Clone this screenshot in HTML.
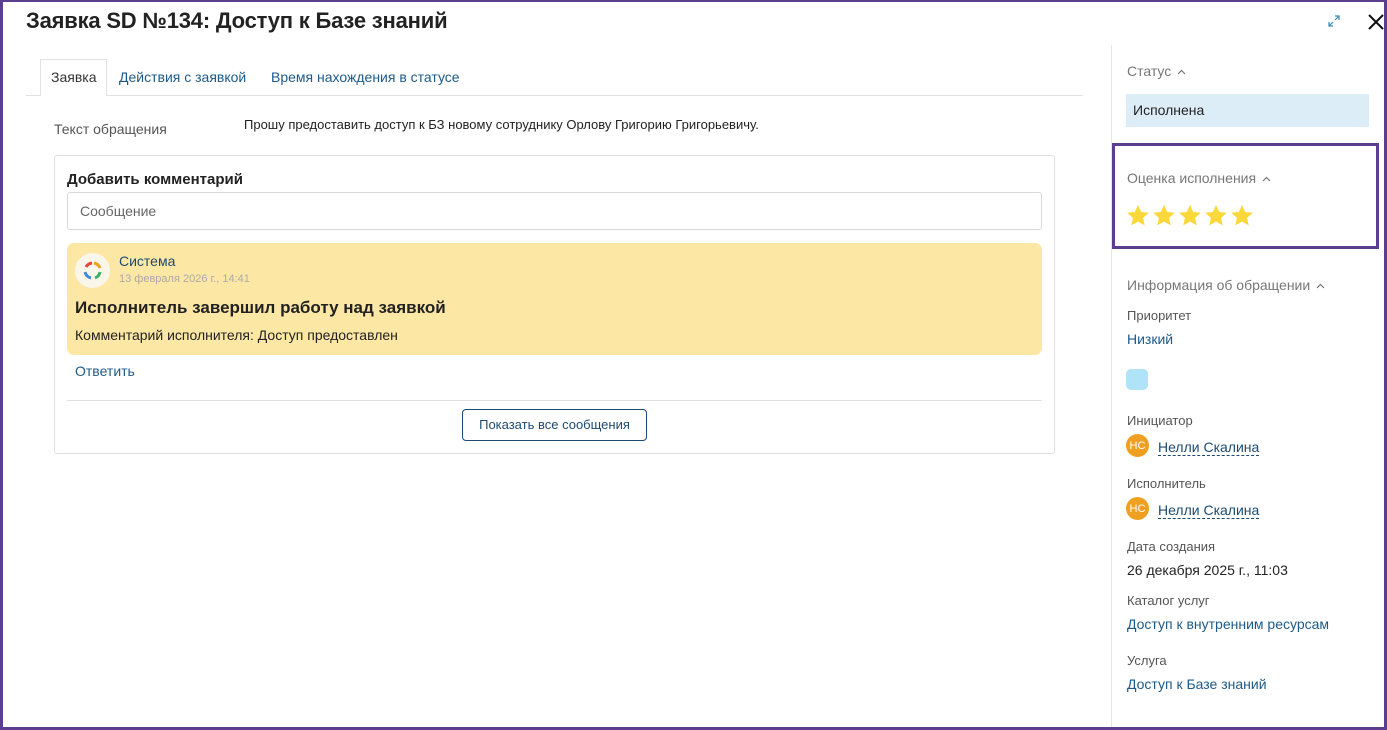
<!DOCTYPE html><html><head><meta charset="utf-8"><style>
*{box-sizing:border-box;margin:0;padding:0}
body{width:1387px;height:730px;overflow:hidden;background:#fff;font-family:"Liberation Sans",sans-serif;color:#222;position:relative}
.frame{position:absolute;inset:0;border:3px solid #5c3e8e;border-top-width:2px;pointer-events:none;z-index:5}
.a{position:absolute;white-space:nowrap}
.lnk{color:#1d5a8a}
.gray{color:#777}
.lbl{font-size:13px;color:#555}
.av{width:23px;height:23px;border-radius:50%;background:#f0a020;color:#fff;font-size:11px;display:flex;align-items:center;justify-content:center}
.dash{border-bottom:1px dashed #1d4a70;color:#1d4a70;font-size:14px}
.chev{display:inline-block;vertical-align:middle;margin-left:6px}
</style></head><body>
<div class="frame"></div>
<div class="a" style="left:26px;top:8px;font-size:22px;font-weight:bold;color:#222;letter-spacing:-0.2px">Заявка SD №134: Доступ к Базе знаний</div>
<svg class="a" style="left:1326px;top:13px" width="16" height="16" viewBox="0 0 16 16" fill="none" stroke="#3a8ab0" stroke-width="1.2"><path d="M9 3h4v4M13 3l-4 4M7 13H3V9M3 13l4-4"/></svg>
<svg class="a" style="left:1367px;top:13px" width="18" height="18" viewBox="0 0 18 18" stroke="#111" stroke-width="2"><path d="M2 2l14 14M16 2L2 16"/></svg>

<div class="a" style="left:26px;top:95px;width:1057px;height:1px;background:#e2e2e2"></div>
<div class="a" style="left:40px;top:59px;width:67px;height:37px;border:1px solid #e2e2e2;border-bottom:none;background:#fff"></div>
<div class="a" style="left:51px;top:69px;font-size:14px;color:#333">Заявка</div>
<div class="a lnk" style="left:119px;top:69px;font-size:14px">Действия с заявкой</div>
<div class="a lnk" style="left:271px;top:69px;font-size:14px">Время нахождения в статусе</div>

<div class="a" style="left:54px;top:121px;font-size:14px;color:#555">Текст обращения</div>
<div class="a" style="left:244px;top:117px;font-size:13px;color:#222">Прошу предоставить доступ к БЗ новому сотруднику Орлову Григорию Григорьевичу.</div>

<div class="a" style="left:54px;top:155px;width:1001px;height:299px;border:1px solid #e0e0e0;border-radius:3px"></div>
<div class="a" style="left:67px;top:171px;font-size:15px;font-weight:bold;color:#222">Добавить комментарий</div>
<div class="a" style="left:67px;top:192px;width:975px;height:38px;border:1px solid #d8d8d8;border-radius:3px"></div>
<div class="a" style="left:80px;top:203px;font-size:14px;color:#666">Сообщение</div>
<div class="a" style="left:67px;top:243px;width:975px;height:112px;background:#fde7a4;border-radius:7px"></div>
<div class="a" style="left:75px;top:253px;width:35px;height:35px;border-radius:50%;background:#fbf6ea"></div>
<svg class="a" style="left:82px;top:260px" width="21" height="21" viewBox="0 0 21 21" fill="none" stroke-width="3"><path d="M4 7A8 8 0 0 1 10 3" stroke="#e24a3a"/><path d="M12 3a8 8 0 0 1 6 5" stroke="#f0a020"/><path d="M18 12a8 8 0 0 1-5 6" stroke="#3ab060"/><path d="M9 18a8 8 0 0 1-6-6" stroke="#3a8ae0"/></svg>
<div class="a lnk" style="left:119px;top:253px;font-size:14px;color:#1d4a70">Система</div>
<div class="a" style="left:119px;top:273px;font-size:11px;color:#aaa">13 февраля 2026 г., 14:41</div>
<div class="a" style="left:75px;top:298px;font-size:17px;font-weight:bold;color:#222">Исполнитель завершил работу над заявкой</div>
<div class="a" style="left:75px;top:327px;font-size:14px;color:#222">Комментарий исполнителя: Доступ предоставлен</div>
<div class="a lnk" style="left:75px;top:363px;font-size:14px">Ответить</div>
<div class="a" style="left:67px;top:400px;width:975px;height:1px;background:#e0e0e0"></div>
<div class="a" style="left:462px;top:409px;width:185px;height:32px;border:1px solid #1d4a70;border-radius:4px;font-size:13px;color:#1d4a70;text-align:center;line-height:30px">Показать все сообщения</div>

<div class="a" style="left:1111px;top:45px;width:1px;height:685px;background:#e6e6e6"></div>
<div class="a gray" style="left:1127px;top:63px;font-size:14px">Статус<svg class="chev" width="9" height="6" viewBox="0 0 9 6" fill="none" stroke="#777" stroke-width="1.2"><path d="M1 5l3.5-3.5L8 5"/></svg></div>
<div class="a" style="left:1126px;top:94px;width:243px;height:33px;background:#dcedf7"></div>
<div class="a" style="left:1133px;top:102px;font-size:14px;color:#222">Исполнена</div>
<div class="a" style="left:1112px;top:143px;width:267px;height:106px;border:3px solid #5c3e8e"></div>
<div class="a gray" style="left:1127px;top:170px;font-size:14px">Оценка исполнения<svg class="chev" width="9" height="6" viewBox="0 0 9 6" fill="none" stroke="#777" stroke-width="1.2"><path d="M1 5l3.5-3.5L8 5"/></svg></div>
<svg class="a" style="left:1126px;top:204px" width="132" height="24" viewBox="0 0 132 24">
<defs><path id="s" d="M12 1l3.2 7 7.6.8-5.7 5.1 1.6 7.5L12 17.6 5.3 21.4l1.6-7.5L1.2 8.8 8.8 8z" fill="#fbd83a"/></defs>
<use href="#s" x="0"/><use href="#s" x="26"/><use href="#s" x="52"/><use href="#s" x="78"/><use href="#s" x="104"/>
</svg>

<div class="a gray" style="left:1127px;top:277px;font-size:14px">Информация об обращении<svg class="chev" width="9" height="6" viewBox="0 0 9 6" fill="none" stroke="#777" stroke-width="1.2"><path d="M1 5l3.5-3.5L8 5"/></svg></div>
<div class="a lbl" style="left:1127px;top:308px">Приоритет</div>
<div class="a lnk" style="left:1127px;top:331px;font-size:14px">Низкий</div>
<div class="a" style="left:1126px;top:369px;width:22px;height:21px;border-radius:5px;background:#aee3f8"></div>
<div class="a lbl" style="left:1127px;top:413px">Инициатор</div>
<div class="a av" style="left:1126px;top:434px">НС</div>
<div class="a dash" style="left:1158px;top:439px">Нелли Скалина</div>
<div class="a lbl" style="left:1127px;top:476px">Исполнитель</div>
<div class="a av" style="left:1126px;top:497px">НС</div>
<div class="a dash" style="left:1158px;top:502px">Нелли Скалина</div>
<div class="a lbl" style="left:1127px;top:539px">Дата создания</div>
<div class="a" style="left:1127px;top:562px;font-size:14px;color:#222">26 декабря 2025 г., 11:03</div>
<div class="a lbl" style="left:1127px;top:593px">Каталог услуг</div>
<div class="a lnk" style="left:1127px;top:616px;font-size:14px">Доступ к внутренним ресурсам</div>
<div class="a lbl" style="left:1127px;top:653px">Услуга</div>
<div class="a lnk" style="left:1127px;top:676px;font-size:14px">Доступ к Базе знаний</div>
</body></html>
